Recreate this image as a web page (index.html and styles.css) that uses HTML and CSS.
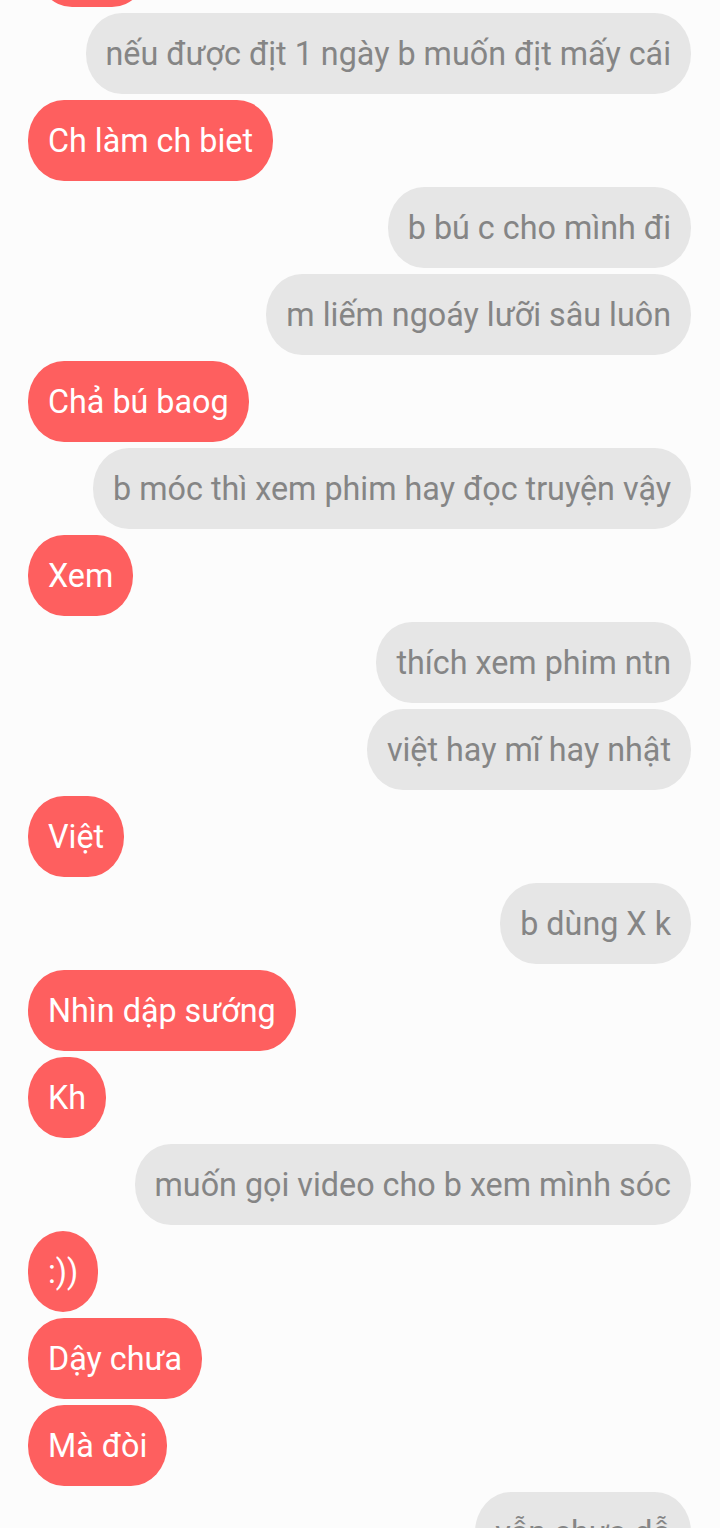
FILE: index.html
```html
<!DOCTYPE html>
<html lang="vi">
<head>
<meta charset="utf-8">
<link rel="stylesheet" href="styles.css">
</head>
<body>
<div class="chat">
  <div class="msg them partial"></div>
  <div class="msg me">nếu được địt 1 ngày b muốn địt mấy cái</div>
  <div class="msg them">Ch làm ch biet</div>
  <div class="msg me">b bú c cho mình đi</div>
  <div class="msg me">m liếm ngoáy lưỡi sâu luôn</div>
  <div class="msg them">Chả bú baog</div>
  <div class="msg me">b móc thì xem phim hay đọc truyện vậy</div>
  <div class="msg them">Xem</div>
  <div class="msg me">thích xem phim ntn</div>
  <div class="msg me">việt hay mĩ hay nhật</div>
  <div class="msg them">Việt</div>
  <div class="msg me">b dùng X k</div>
  <div class="msg them">Nhìn dập sướng</div>
  <div class="msg them">Kh</div>
  <div class="msg me">muốn gọi video cho b xem mình sóc</div>
  <div class="msg them">:))</div>
  <div class="msg them">Dậy chưa</div>
  <div class="msg them">Mà đòi</div>
  <div class="msg me">vẫn chưa dỗ</div>
</div>
</body>
</html>
```
FILE: styles.css
```css
html, body {
  margin: 0;
  padding: 0;
  background: #fcfcfc;
  overflow: hidden;
  height: 1528px;
}
.chat {
  display: flex;
  flex-direction: column;
  gap: 6px;
  margin-top: -74px;
  padding: 0 29px 0 28px;
}
.msg {
  height: 81px;
  box-sizing: border-box;
  padding: 0 20px;
  display: flex;
  align-items: center;
  border-radius: 36px / 40px;
  font-family: Roboto, "Noto Sans", sans-serif;
  font-size: 32.3px;
  white-space: nowrap;
}
.partial {
  width: 112px;
  margin-left: 8px;
}
.them {
  align-self: flex-start;
  background: #fe5f5f;
  color: #ffffff;
}
.me {
  align-self: flex-end;
  background: #e6e6e6;
  color: #858585;
}
```
